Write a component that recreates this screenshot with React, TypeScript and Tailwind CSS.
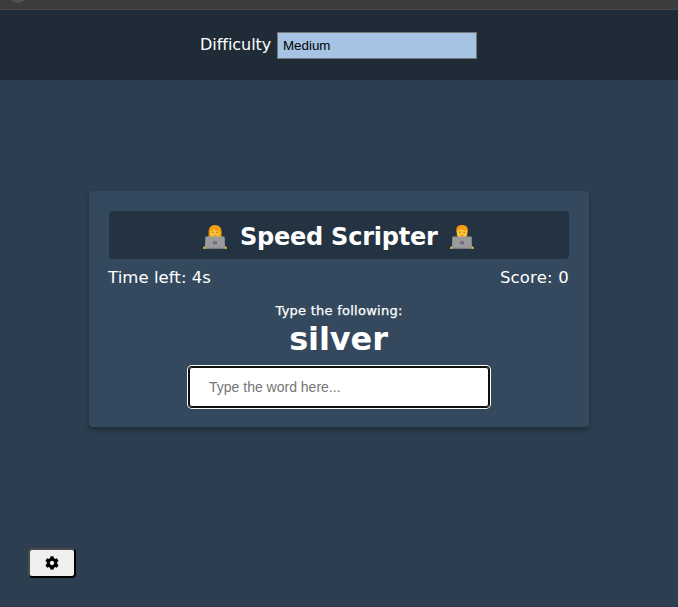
import React from "react";

function Coder({ longHair }: { longHair: boolean }) {
  return (
    <svg width="24" height="24" viewBox="0 0 24 24" className="shrink-0">
      {longHair ? (
        <path d="M12 0C7.500 0 5.700 3 5.600 7v5.300h13V7C18.500 3 16.500 0 12 0Z" fill="#f39c12" />
      ) : (
        <path d="M12 0C7.900 0 6 2 6.300 6l1 2.500h9.500l1-2.500C18 2 16 0 12 0Z" fill="#f59b14" />
      )}
      {longHair ? (
        <path d="M7.300 6.200c1.500-.5 2.600-1.300 3.400-2.500 1.500 1.400 3.500 2.200 6 2.500v2.500c0 2.500-1.800 4.300-4.700 4.300s-4.700-1.800-4.700-4.300Z" fill="#fcc431" />
      ) : (
        <path d="M6.800 6c1.500-.3 2.800-1 3.700-2 1.800.9 4 1.400 6.800 1.700v3.300c0 2.500-2.100 4.500-5.300 4.500S6.800 11.500 6.800 9Z" fill="#fcc431" />
      )}
      <path d="M9.200 6.700h1.500v1H9.200zM13.400 6.700h1.500v1h-1.500z" fill="#98693b" />
      <path d="M10.600 9.900h2.800c-.3 1-2.500 1-2.800 0Z" fill="#e1523d" />
      <path d="M0 23.500c0-1.500 1-2.500 3-2.300l1 2.500H0ZM24 23.500c0-1.500-1-2.500-3-2.300l-1 2.500h4Z" fill="#fcc431" />
      <path d="M2.300 12.300c0-.5.300-.8.800-.8h17.800c.5 0 .8.300.8.800l.3 11.200H2Z" fill="#9b9b9d" />
      <path d="M2 22.800h20v.9H2z" fill="#858488" />
      <rect x="10.200" y="16.300" width="3.600" height="3" rx=".5" fill="#67597a" />
      <path d="M11 17.400h2v.8h-2z" fill="#a395a8" />
    </svg>
  );
}

export default function App() {
  return (
    <div className="flex h-[607px] w-[678px] flex-col overflow-hidden bg-[#2d3e50] font-['DejaVu_Sans',sans-serif] text-white">
      <div className="flex h-[10px] shrink-0 items-end border-b border-[#474747] bg-[#3c3c3c]">
        <div className="ml-2 h-5 w-5 -translate-y-[6px] rounded-full bg-[#535353]" />
      </div>
      <header className="flex h-[70px] shrink-0 items-start bg-[#202b38] pl-[200px] pt-[22px]">
        <label className="w-[77px] pt-px text-[16px] leading-6 tracking-[-0.03px]">Difficulty</label>
        <div className="flex h-[27px] w-[200px] items-center border border-[#767676] bg-[#a7c3e3] pl-[5px] font-['Liberation_Sans',Arial,sans-serif] text-[13.333px] text-black">
          Medium
        </div>
      </header>
      <main className="ml-[89px] mt-[111px] flex h-[236px] w-[500px] shrink-0 flex-col items-center rounded-[4px] bg-[#34495e] px-5 pt-5 shadow-[0_3px_5px_rgba(0,0,0,0.3)]">
        <h1 className="flex h-12 w-full shrink-0 items-center rounded-[4px] bg-[#243342] pl-[94px] pt-[3px]">
          <Coder longHair />
          <span className="ml-[13px] w-[210px] whitespace-nowrap text-[24px] font-bold leading-[30px] tracking-[-0.24px]">Speed Scripter</span>
          <Coder longHair={false} />
        </h1>
        <div className="mt-[9px] flex h-5 w-full shrink-0 justify-between text-[16.500px] leading-5">
          <span className="-ml-px tracking-[0.06px]">Time left: 4s</span>
          <span className="tracking-[0.200px]">Score: 0</span>
        </div>
        <p className="mt-[15px] h-4 shrink-0 text-[13px] leading-4 tracking-[0.250px] [-webkit-text-stroke:0.25px_white]">Type the following:</p>
        <h2 className="mr-px h-10 shrink-0 text-[32px] font-bold leading-10 tracking-[-0.1px]">silver</h2>
        <div className="mt-2 flex h-10 w-[300px] shrink-0 items-center rounded-[3px] bg-white pl-5 font-['Liberation_Sans',Arial,sans-serif] text-[14px] text-[#757575] shadow-[inset_0_0_0_1px_#101010,0_0_0_1px_#101010,0_0_0_2px_#fff]">
          Type the word here...
        </div>
      </main>
      <button className="ml-7 mt-[121px] flex h-[30px] w-12 shrink-0 items-center justify-center rounded-[4px] border-2 border-t-[#4b4b4b] border-l-[#4b4b4b] border-r-black border-b-black bg-[#efefef]">
        <svg width="14" height="14" viewBox="0 0 512 512" className="text-black">
          <path fill="currentColor" d="M487.400 315.700l-42.600-24.600c4.300-23.200 4.300-47 0-70.200l42.600-24.600c4.900-2.800 7.100-8.600 5.500-14-11.100-35.600-30-67.800-54.700-94.600-3.800-4.100-10-5.100-14.800-2.300L380.800 110c-17.900-15.400-38.500-27.300-60.800-35.100V25.800c0-5.600-3.900-10.500-9.400-11.700-36.700-8.200-74.300-7.800-109.200 0-5.500 1.200-9.400 6.100-9.400 11.700V75c-22.200 7.900-42.800 19.800-60.800 35.100L88.700 85.500c-4.900-2.800-11-1.900-14.800 2.300-24.700 26.700-43.600 58.900-54.700 94.600-1.700 5.400.6 11.200 5.500 14L67.300 221c-4.300 23.200-4.300 47 0 70.200l-42.600 24.600c-4.900 2.800-7.100 8.600-5.500 14 11.100 35.600 30 67.800 54.700 94.600 3.800 4.100 10 5.100 14.800 2.300l42.600-24.600c17.900 15.400 38.500 27.300 60.800 35.100v49.200c0 5.600 3.900 10.500 9.400 11.700 36.700 8.200 74.300 7.800 109.200 0 5.500-1.200 9.400-6.100 9.400-11.700v-49.200c22.200-7.900 42.800-19.800 60.800-35.100l42.600 24.600c4.900 2.800 11 1.900 14.800-2.300 24.700-26.700 43.600-58.900 54.700-94.600 1.500-5.500-.7-11.300-5.600-14.100zM256 336c-44.100 0-80-35.900-80-80s35.900-80 80-80 80 35.900 80 80-35.900 80-80 80z" />
        </svg>
      </button>
      <div className="mt-auto h-px bg-[#2d3954]" />
    </div>
  );
}
